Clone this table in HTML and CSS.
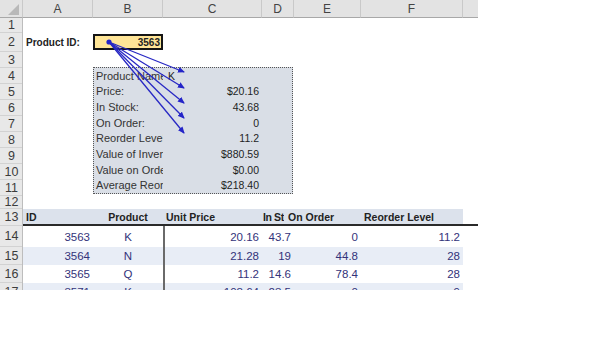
FILE: index.html
```html
<!DOCTYPE html>
<html>
<head>
<meta charset="utf-8">
<link rel="stylesheet" href="styles.css">
</head>
<body>
<div class="sheet">
  <div class="corner"><span class="tri"></span></div>
  <div class="colhead c2">A</div>
  <div class="colhead c3">B</div>
  <div class="colhead c4">C</div>
  <div class="colhead c5">D</div>
  <div class="colhead c6">E</div>
  <div class="colhead c7">F</div>
  <div class="colhead c8 last"></div>

  <div class="rownums">
    <div>1</div><div>2</div><div>3</div><div>4</div><div>5</div><div>6</div>
    <div>7</div><div>8</div><div>9</div><div>10</div><div>11</div><div>12</div>
    <div>13</div><div>14</div><div>15</div><div>16</div><div>17</div>
  </div>

  <div class="id-label">Product ID:</div>
  <div class="id-cell">3563</div>

  <div class="infobox">
    <div class="lab">Product Name:</div><div class="val left">K</div><div></div>
    <div class="lab">Price:</div><div class="val">$20.16</div><div></div>
    <div class="lab">In Stock:</div><div class="val">43.68</div><div></div>
    <div class="lab">On Order:</div><div class="val">0</div><div></div>
    <div class="lab">Reorder Level</div><div class="val">11.2</div><div></div>
    <div class="lab">Value of Inventory</div><div class="val">$880.59</div><div></div>
    <div class="lab">Value on Order</div><div class="val">$0.00</div><div></div>
    <div class="lab">Average Reorder</div><div class="val">$218.40</div><div></div>
  </div>

  <div class="table">
    <div class="th">ID</div>
    <div class="th center">Product</div>
    <div class="th">Unit Price</div>
    <div class="th clipd"><span class="clip">In Stock</span></div>
    <div class="th shiftl">On Order</div>
    <div class="th">Reorder Level</div>
    <div class="th blank"></div>

    <div class="td num">3563</div><div class="td center">K</div><div class="td num vl">20.16</div><div class="td num">43.7</div><div class="td num">0</div><div class="td num">11.2</div><div class="td blank"></div>
    <div class="td num band">3564</div><div class="td center band">N</div><div class="td num vl band">21.28</div><div class="td num band">19</div><div class="td num band">44.8</div><div class="td num band">28</div><div class="td blank"></div>
    <div class="td num">3565</div><div class="td center">Q</div><div class="td num vl">11.2</div><div class="td num">14.6</div><div class="td num">78.4</div><div class="td num">28</div><div class="td blank"></div>
    <div class="td num band">3571</div><div class="td center band">K</div><div class="td num vl band">108.64</div><div class="td num band">23.5</div><div class="td num band">0</div><div class="td num band">9</div><div class="td blank"></div>
  </div>

  <svg class="arrows" width="478" height="290" viewBox="0 0 478 290">
    <defs>
      <marker id="ah" markerWidth="7" markerHeight="6" refX="6" refY="3" orient="auto" markerUnits="userSpaceOnUse">
        <path d="M0,0 L7,3 L0,6 Z" fill="#2424c8"/>
      </marker>
    </defs>
    <g stroke="#2828c4" stroke-width="1.3" fill="none">
      <line x1="109" y1="42" x2="184" y2="72" marker-end="url(#ah)"/>
      <line x1="109" y1="42" x2="184" y2="88" marker-end="url(#ah)"/>
      <line x1="109" y1="42" x2="184" y2="103" marker-end="url(#ah)"/>
      <line x1="109" y1="42" x2="184" y2="118" marker-end="url(#ah)"/>
      <line x1="109" y1="42" x2="184" y2="133" marker-end="url(#ah)"/>
    </g>
    <circle cx="109" cy="42" r="2.6" fill="#2424c8"/>
  </svg>
</div>
</body>
</html>
```

FILE: styles.css
```css
html, body {
  margin: 0;
  padding: 0;
  background: #ffffff;
}

body {
  font-family: "Liberation Sans", Arial, sans-serif;
  color: #222;
}

.sheet {
  position: relative;
  width: 478px;
  height: 290px;
  overflow: hidden;
  display: grid;
  grid-template-columns: 23px 70px 70px 99px 32px 67px 102px 15px;
  grid-template-rows: 18px 15px 19px 16px repeat(8, 16px) 13px 17px 21px 18px 18px 18px;
}

.corner {
  grid-column: 1;
  grid-row: 1;
  background: #e3e3e3;
  border-right: 1px solid #c9c9c9;
  border-bottom: 1px solid #a8a8a8;
  box-sizing: border-box;
  position: relative;
}

.corner .tri {
  position: absolute;
  right: 3px;
  bottom: 2px;
  width: 0;
  height: 0;
  border-left: 11px solid transparent;
  border-bottom: 11px solid #b9b9b9;
}

.colhead {
  grid-row: 1;
  background: #e3e3e3;
  border-right: 1px solid #c9c9c9;
  border-bottom: 1px solid #a8a8a8;
  box-sizing: border-box;
  font-size: 12px;
  color: #444;
  display: flex;
  align-items: center;
  justify-content: center;
}

.colhead.last { border-right: none; }
.c2 { grid-column: 2; }
.c3 { grid-column: 3; }
.c4 { grid-column: 4; }
.c5 { grid-column: 5; }
.c6 { grid-column: 6; }
.c7 { grid-column: 7; }
.c8 { grid-column: 8; }

.rownums {
  grid-column: 1;
  grid-row: 2 / 19;
  display: grid;
  grid-template-rows: 15px 19px 16px repeat(8, 16px) 13px 17px 21px 18px 18px 18px;
  background: #e8e8e8;
  border-right: 1px solid #bdbdbd;
}

.rownums div {
  border-bottom: 1px solid #d2d2d2;
  font-size: 12.5px;
  color: #3c3c3c;
  display: flex;
  align-items: center;
  justify-content: center;
  padding-left: 1px;
}

.id-label {
  grid-column: 2;
  grid-row: 3;
  font-size: 10px;
  font-weight: bold;
  display: flex;
  align-items: center;
  padding-left: 3px;
  white-space: nowrap;
}

.id-cell {
  grid-column: 3;
  grid-row: 3;
  background: #ffe597;
  border: 2px solid #151515;
  box-sizing: border-box;
  font-size: 10px;
  font-weight: bold;
  display: flex;
  align-items: center;
  justify-content: flex-end;
  padding-right: 1px;
  height: 16px;
  margin-top: 1px;
}

.infobox {
  grid-column: 3 / 6;
  grid-row: 5 / 13;
  background: #d9dee6;
  border: 1px dotted #555;
  margin-top: -1px;
  margin-right: 1px;
  margin-bottom: 2px;
  display: grid;
  grid-template-columns: 69px 99px 1fr;
  grid-template-rows: repeat(8, 1fr);
}

.infobox .lab {
  font-size: 11px;
  color: #333;
  white-space: nowrap;
  overflow: hidden;
  display: flex;
  align-items: center;
  padding-left: 2px;
  padding-right: 1px;
}

.infobox .val {
  font-size: 10.5px;
  color: #1e1e1e;
  display: flex;
  align-items: center;
  justify-content: flex-end;
  padding-right: 3px;
  white-space: nowrap;
}

.infobox .val.left {
  justify-content: flex-start;
  padding-left: 5px;
}

.table {
  grid-column: 2 / 9;
  grid-row: 14 / 19;
  display: grid;
  grid-template-columns: 70px 70px 99px 32px 67px 102px 15px;
  grid-template-rows: 17px 21px 18px 18px 18px;
}

.th {
  background: #dce2ec;
  border-bottom: 2px solid #2a2a2a;
  font-size: 10.5px;
  font-weight: bold;
  color: #222;
  display: flex;
  align-items: center;
  padding-left: 3px;
  white-space: nowrap;
  overflow: hidden;
}

.th.center { justify-content: center; padding-left: 0; }
.th.clipd { padding-left: 1px; letter-spacing: -0.4px; }
.th .clip { display: block; width: 21px; overflow: hidden; }
.th.shiftl { margin-left: -6px; padding-left: 0; overflow: visible; }
.th.blank { background: transparent; }

.td {
  font-size: 11.5px;
  color: #33337a;
  display: flex;
  align-items: center;
  white-space: nowrap;
}

.td.num { justify-content: flex-end; padding-right: 3px; }
.td.center { justify-content: center; }
.td.vl { border-left: 2px solid #6a6a6a; }
.td.band { background: #e8edf6; }

.arrows {
  position: absolute;
  left: 0;
  top: 0;
  pointer-events: none;
}
```
